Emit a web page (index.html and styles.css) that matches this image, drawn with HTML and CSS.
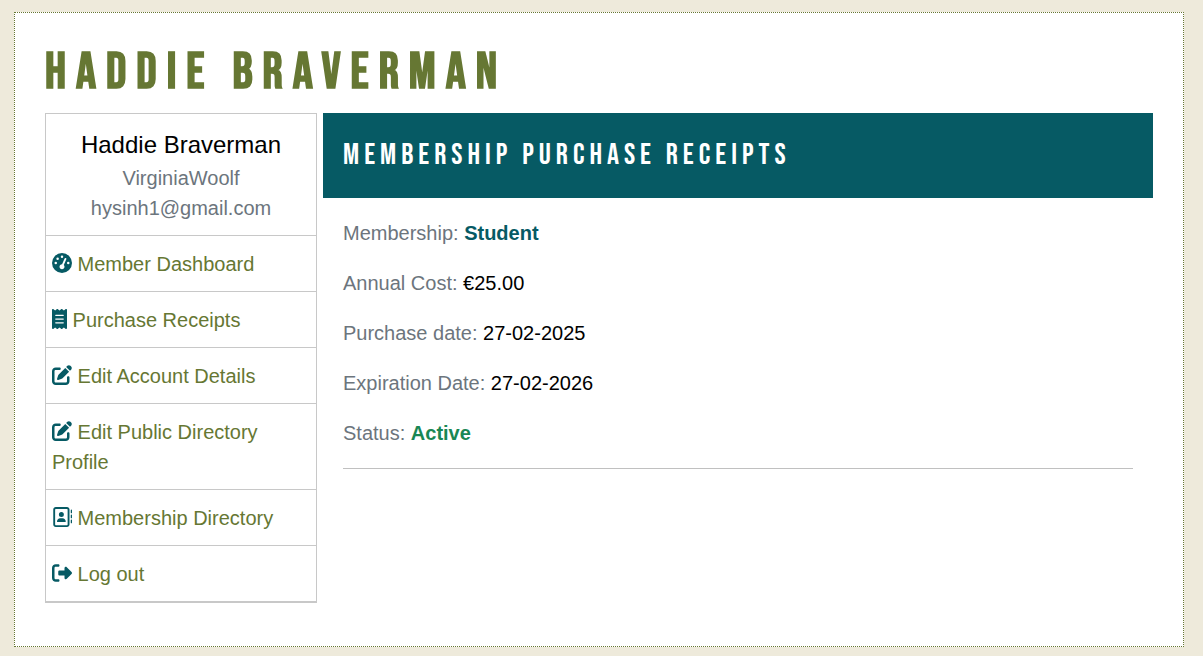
FILE: index.html
```html
<!DOCTYPE html>
<html lang="en">
<head>
<meta charset="utf-8">
<title>Haddie Braverman</title>
<link rel="stylesheet" href="styles.css">
</head>
<body>
<div class="page">
  <h1 class="page-title">Haddie Braverman</h1>
  <div class="account">
    <aside class="sidebar">
      <div class="profile">
        <div class="profile-name">Haddie Braverman</div>
        <div>VirginiaWoolf</div>
        <div>hysinh1@gmail.com</div>
      </div>
      <nav class="menu">
        <a class="menu-item" href="#"><svg class="icon" viewBox="0 0 512 512" aria-hidden="true"><path d="M0 256a256 256 0 1 1 512 0A256 256 0 1 1 0 256zM288 96a32 32 0 1 0 -64 0 32 32 0 1 0 64 0zM256 416c35.300 0 64-28.700 64-64c0-17.400-6.900-33.100-18.100-44.600L366 161.700c5.300-12.100-.2-26.300-12.300-31.600s-26.300 .2-31.600 12.300L257.900 288c-.6 0-1.300 0-1.900 0c-35.300 0-64 28.700-64 64s28.700 64 64 64zM176 144a32 32 0 1 0 -64 0 32 32 0 1 0 64 0zM96 288a32 32 0 1 0 0-64 32 32 0 1 0 0 64zm352-32a32 32 0 1 0 -64 0 32 32 0 1 0 64 0z"/></svg> Member Dashboard</a>
        <a class="menu-item" href="#"><svg class="icon icon-narrow" viewBox="0 0 384 512" aria-hidden="true"><path d="M14 2.200C22.500-1.700 32.500-.3 39.600 5.800L80 40.400 120.400 5.800c9-7.700 22.300-7.700 31.200 0L192 40.400 232.400 5.800c9-7.700 22.300-7.700 31.200 0L304 40.400 344.400 5.800c7.100-6.100 17.100-7.500 25.600-3.600s14 12.400 14 21.800V488c0 9.400-5.500 17.900-14 21.800s-18.500 2.500-25.600-3.600L304 471.600l-40.400 34.600c-9 7.700-22.300 7.700-31.200 0L192 471.600l-40.400 34.600c-9 7.700-22.300 7.700-31.200 0L80 471.600 39.600 506.200c-7.100 6.100-17.100 7.500-25.600 3.600S0 497.400 0 488V24C0 14.600 5.500 6.100 14 2.200zM96 144c-8.800 0-16 7.200-16 16s7.200 16 16 16H288c8.800 0 16-7.200 16-16s-7.200-16-16-16H96zM80 352c0 8.800 7.200 16 16 16H288c8.800 0 16-7.200 16-16s-7.200-16-16-16H96c-8.800 0-16 7.200-16 16zM96 240c-8.800 0-16 7.200-16 16s7.200 16 16 16H288c8.800 0 16-7.200 16-16s-7.200-16-16-16H96z"/></svg> Purchase Receipts</a>
        <a class="menu-item" href="#"><svg class="icon" viewBox="0 0 512 512" aria-hidden="true"><path d="M471.600 21.400c-21.900-21.900-57.300-21.900-79.200 0L362.300 51.700l97.900 97.900 30.100-30.100c21.900-21.900 21.900-57.300 0-79.200L471.600 21.400zm-299.200 220c-6.100 6.100-10.800 13.600-13.500 21.900l-29.600 88.800c-2.900 8.600-.6 18.100 5.800 24.600s15.900 8.700 24.600 5.800l88.800-29.600c8.200-2.700 15.700-7.400 21.900-13.500L437.700 172.300 339.700 74.300 172.400 241.400zM96 64C43 64 0 107 0 160V416c0 53 43 96 96 96H352c53 0 96-43 96-96V320c0-17.700-14.300-32-32-32s-32 14.300-32 32v96c0 17.700-14.300 32-32 32H96c-17.700 0-32-14.300-32-32V160c0-17.700 14.300-32 32-32h96c17.700 0 32-14.300 32-32s-14.300-32-32-32H96z"/></svg> Edit Account Details</a>
        <a class="menu-item" href="#"><svg class="icon" viewBox="0 0 512 512" aria-hidden="true"><path d="M471.600 21.400c-21.900-21.900-57.300-21.900-79.200 0L362.300 51.700l97.900 97.900 30.100-30.100c21.900-21.900 21.900-57.300 0-79.200L471.600 21.400zm-299.200 220c-6.100 6.100-10.800 13.600-13.500 21.900l-29.600 88.800c-2.900 8.600-.6 18.100 5.800 24.600s15.900 8.700 24.600 5.800l88.800-29.600c8.200-2.700 15.700-7.400 21.900-13.500L437.700 172.300 339.700 74.300 172.400 241.400zM96 64C43 64 0 107 0 160V416c0 53 43 96 96 96H352c53 0 96-43 96-96V320c0-17.700-14.300-32-32-32s-32 14.300-32 32v96c0 17.700-14.300 32-32 32H96c-17.700 0-32-14.300-32-32V160c0-17.700 14.300-32 32-32h96c17.700 0 32-14.300 32-32s-14.300-32-32-32H96z"/></svg> Edit Public Directory Profile</a>
        <a class="menu-item" href="#"><svg class="icon" viewBox="0 0 512 512" aria-hidden="true"><path d="M384 48c8.800 0 16 7.200 16 16V448c0 8.800-7.200 16-16 16H96c-8.800 0-16-7.200-16-16V64c0-8.800 7.200-16 16-16H384zM96 0C60.700 0 32 28.700 32 64V448c0 35.300 28.700 64 64 64H384c35.300 0 64-28.700 64-64V64c0-35.300-28.700-64-64-64H96zM240 256a64 64 0 1 0 0-128 64 64 0 1 0 0 128zm-32 32c-44.200 0-80 35.800-80 80c0 8.800 7.200 16 16 16H336c8.800 0 16-7.200 16-16c0-44.200-35.800-80-80-80H208zM512 80c0-8.800-7.200-16-16-16s-16 7.200-16 16v64c0 8.800 7.200 16 16 16s16-7.200 16-16V80zM496 192c-8.800 0-16 7.200-16 16v64c0 8.800 7.200 16 16 16s16-7.200 16-16V208c0-8.800-7.200-16-16-16zm16 144c0-8.800-7.200-16-16-16s-16 7.200-16 16v64c0 8.800 7.200 16 16 16s16-7.200 16-16V336z"/></svg> Membership Directory</a>
        <a class="menu-item" href="#"><svg class="icon" viewBox="0 0 512 512" aria-hidden="true"><path d="M377.900 105.900L500.700 228.700c7.200 7.200 11.300 17.100 11.300 27.300s-4.100 20.100-11.300 27.300L377.900 406.100c-6.400 6.400-15 9.900-24 9.900c-18.700 0-33.900-15.200-33.900-33.900V320H192c-17.700 0-32-14.300-32-32V224c0-17.700 14.300-32 32-32H320V129.900c0-18.700 15.200-33.900 33.900-33.900c9 0 17.600 3.600 24 9.900zM160 96H96c-17.700 0-32 14.300-32 32V384c0 17.700 14.300 32 32 32h64c17.700 0 32 14.300 32 32s-14.300 32-32 32H96c-53 0-96-43-96-96V128C0 75 43 32 96 32h64c17.700 0 32 14.300 32 32s-14.300 32-32 32z"/></svg> Log out</a>
      </nav>
    </aside>
    <main class="content">
      <header class="content-header">
        <h2 class="content-title">Membership Purchase Receipts</h2>
      </header>
      <section class="receipt">
        <p class="receipt-row">Membership: <strong class="plan">Student</strong></p>
        <p class="receipt-row">Annual Cost: <span class="value">€25.00</span></p>
        <p class="receipt-row">Purchase date: <span class="value">27-02-2025</span></p>
        <p class="receipt-row">Expiration Date: <span class="value">27-02-2026</span></p>
        <p class="receipt-row">Status: <strong class="active">Active</strong></p>
        <hr class="divider">
      </section>
    </main>
  </div>
</div>
</body>
</html>
```
FILE: styles.css
```css
* {
  box-sizing: border-box;
}

body {
  margin: 12px 19px 9px 14px;
  background: #eeeadb;
  color: #6c757d;
  font: 20px/30px "Liberation Sans", Arial, sans-serif;
}

.page {
  padding: 30px 30px 43px;
  border: 1px dotted #667733;
  background: #fff;
}

.page-title,
.content-title {
  margin: 0;
  font-family: "Bebas Neue", "Liberation Sans Narrow", sans-serif;
  text-transform: uppercase;
}

.page-title {
  margin-bottom: 10px;
  color: #667733;
  font-size: 50px;
  font-weight: 700;
  line-height: 60px;
  letter-spacing: 10px;
}

.account {
  display: grid;
  grid-template-columns: 272px 1fr;
  align-items: start;
  gap: 6px;
}

.sidebar {
  border: 1px solid #c8c8c8;
}

.profile {
  padding: 13px 6px 12px;
  border-bottom: 1px solid #c8c8c8;
  text-align: center;
}

.profile-name {
  color: #000;
  font-size: 24px;
  line-height: 36px;
}

.menu-item {
  display: block;
  padding: 13px 6px 12px;
  border-bottom: 1px solid #c8c8c8;
  color: #667733;
  text-decoration: none;
}

.icon {
  width: 20px;
  height: 20px;
  fill: #065a64;
  vertical-align: -2px;
}

.icon-narrow {
  width: 15px;
}

.content-header {
  padding: 24px 20px 25px;
  background: #065a64;
}

.content-title {
  color: #fff;
  font-size: 30px;
  font-weight: 400;
  line-height: 36px;
  letter-spacing: 5px;
}

.receipt {
  padding: 20px;
}

.receipt-row {
  margin: 0 0 20px;
}

.value {
  color: #000;
}

.plan {
  color: #065a64;
}

.active {
  color: #198754;
}

.divider {
  margin: 0;
  border: 0;
  border-top: 1px solid #c0c0c0;
}
```
